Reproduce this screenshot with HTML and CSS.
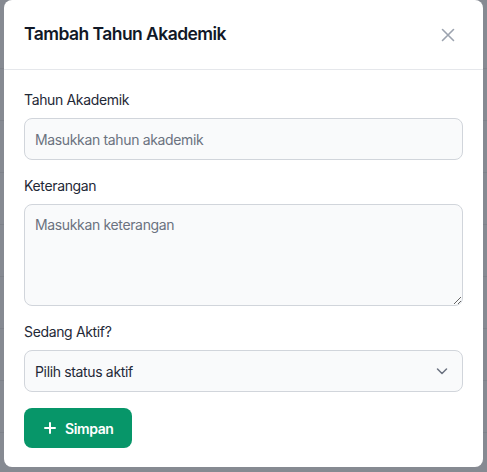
FILE: index.html
```html
<!DOCTYPE html>
<html lang="id">
<head>
<meta charset="utf-8">
<title>Tambah Tahun Akademik</title>
<link rel="stylesheet" href="styles.css">
</head>
<body>
<div class="backdrop">
  <div class="rows">
    <div class="row"></div><div class="row"></div><div class="row"></div><div class="row"></div><div class="row"></div><div class="row"></div><div class="row"></div><div class="row"></div><div class="row"></div>
  </div>
  <div class="modal">
    <div class="modal-header">
      <h2 class="modal-title">Tambah Tahun Akademik</h2>
      <button class="close-btn" type="button" aria-label="Tutup">
        <svg width="16" height="16" viewBox="0 0 16 16" fill="none" stroke="#9ca3af" stroke-width="1.6" stroke-linecap="round"><path d="M2.5 2.5l11 11M13.5 2.5l-11 11"/></svg>
      </button>
    </div>
    <form class="modal-body">
      <div class="group">
        <label class="label">Tahun Akademik</label>
        <input class="field" type="text" placeholder="Masukkan tahun akademik">
      </div>
      <div class="group">
        <label class="label">Keterangan</label>
        <textarea class="field area" placeholder="Masukkan keterangan"></textarea>
      </div>
      <div class="group">
        <label class="label">Sedang Aktif?</label>
        <div class="select field">
          <span class="select-text">Pilih status aktif</span>
          <svg width="12" height="12" viewBox="0 0 12 12" fill="none" stroke="#6b7280" stroke-width="1.5" stroke-linecap="round" stroke-linejoin="round"><path d="M1.5 4l4.5 4.5L10.5 4"/></svg>
        </div>
      </div>
      <button class="save-btn" type="button">
        <svg width="12" height="12" viewBox="0 0 12 12" fill="none" stroke="#ffffff" stroke-width="2" stroke-linecap="round"><path d="M6 1v10M1 6h10"/></svg>
        <span>Simpan</span>
      </button>
    </form>
  </div>
</div>
</body>
</html>
```
FILE: styles.css
```css
* { box-sizing: border-box; }
html, body { margin: 0; padding: 0; }
body {
  font-family: Inter, "Noto Sans", sans-serif;
  background: #868a92;
  width: 487px;
  height: 472px;
  overflow: hidden;
}
.backdrop {
  position: relative;
  height: 472px;
  padding: 0 4px;
}
.rows {
  position: absolute;
  inset: 0;
  padding-top: 17px;
}
.row {
  height: 52px;
  border-bottom: 1px solid #7e828a;
}
.modal {
  position: relative;
  background: #ffffff;
  border-radius: 8px;
  height: 467px;
}
.modal-header {
  display: flex;
  align-items: center;
  justify-content: space-between;
  height: 70px;
  padding: 0 27px 0 20px;
  border-bottom: 1px solid #e5e7eb;
}
.modal-title {
  margin: 0;
  font-size: 17.5px;
  font-weight: 600;
  letter-spacing: -0.55px;
  color: #111827;
  line-height: 28px;
  padding-bottom: 2px;
}
.close-btn {
  border: 0;
  background: none;
  padding: 0;
  display: flex;
  cursor: pointer;
}
.modal-body {
  padding: 20px 20px 20px;
  margin: 0;
}
.group { margin-bottom: 16px; }
.label {
  display: block;
  font-size: 14px;
  line-height: 20px;
  letter-spacing: -0.35px;
  color: #1f2937;
  margin-bottom: 8px;
}
.field {
  display: block;
  width: 100%;
  height: 42px;
  padding: 0 10px;
  font-family: inherit;
  font-size: 14px;
  letter-spacing: -0.35px;
  color: #1f2937;
  background: #f9fafb;
  border: 1px solid #d1d5db;
  border-radius: 8px;
  outline: none;
}
.field::placeholder { color: #6b7280; }
.area {
  height: 102px;
  padding: 10px 10px;
  resize: vertical;
  line-height: 20px;
}
.select {
  display: flex;
  align-items: center;
  justify-content: space-between;
  padding: 0 14px 0 10px;
}
.save-btn {
  display: flex;
  align-items: center;
  gap: 9px;
  height: 40px;
  padding: 0 19px 0 20px;
  border: 0;
  border-radius: 8px;
  background: #079669;
  color: #ffffff;
  font-family: inherit;
  font-size: 14px;
  font-weight: 600;
  letter-spacing: -0.4px;
  cursor: pointer;
}
```
